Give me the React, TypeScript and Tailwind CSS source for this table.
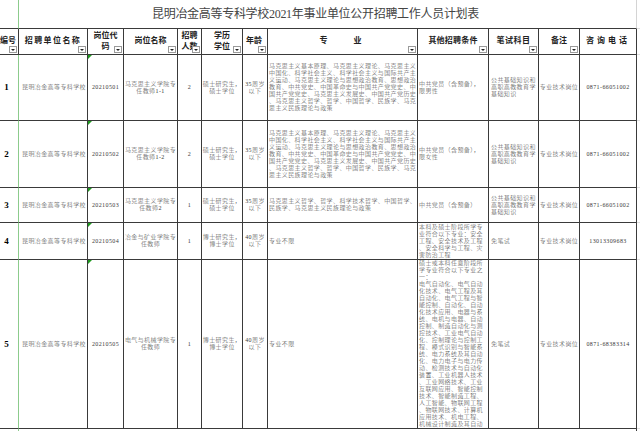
import clsx from "clsx";

const FONT = "font-['Liberation_Serif','Noto_Sans_CJK_SC',serif]";
const COLS =
  "grid-cols-[24px_69px_36px_54px_24px_41px_25px_150px_71px_50px_41px_57px_10px]";
const ROWS = "grid-rows-[29px_26px_66px_67px_35px_37px_169px_20px]";

const marxMajor = [
  "马克思主义基本原理、马克思主义理论、马克思主义",
  "中国化、科学社会主义、科学社会主义与国际共产主",
  "义运动、马克思主义理论与思想政治教育、思想政治",
  "教育、中共党史、中国革命史与中国共产党党史、中",
  "国共产党党史、马克思主义发展史、中国共产党历史",
  "、马克思主义哲学、哲学、中国哲学、民族学、马克",
  "思主义民族理论与政策",
];

const examLines = ["公共基础知识和", "高职高教教育学", "基础知识"];

const elecLines = [
  "硕士或本科任意阶段所",
  "学专业符合以下专业之",
  "一：",
  "电气自动化、电气自动",
  "化技术、电气工程及其",
  "自动化、电气工程与智",
  "能控制、自动化、自动",
  "化技术应用、电器与系",
  "统、电机与电器、自动",
  "控制、制造自动化与测",
  "控技术、工业电气自动",
  "化、控制理论与控制工",
  "程、模式识别与智能系",
  "统、电力系统及其自动",
  "化、电力电子与电力传",
  "动、检测技术与自动化",
  "装置、工业机器人技术",
  "、工业网络技术、工业",
  "互联网应用、智能控制",
  "技术、智能制造工程、",
  "人工智能、物联网工程",
  "、物联网技术、计算机",
  "应用技术、机电工程、",
  "机械设计制造及其自动",
];

type Row = {
  no: string;
  code: string;
  post: string[];
  num: string;
  edu: string[];
  age: string[];
  major: string[];
  other: string[];
  otherLeading?: string;
  exam: string[];
  tel: string;
};

const rows: Row[] = [
  {
    no: "1",
    code: "20210501",
    post: ["马克思主义学院专", "任教师1-1"],
    num: "2",
    edu: ["硕士研究生，", "硕士学位"],
    age: ["35周岁", "以下"],
    major: marxMajor,
    other: ["中共党员（含预备），", "限男性"],
    exam: examLines,
    tel: "0871-66051002",
  },
  {
    no: "2",
    code: "20210502",
    post: ["马克思主义学院专", "任教师1-2"],
    num: "2",
    edu: ["硕士研究生，", "硕士学位"],
    age: ["35周岁", "以下"],
    major: marxMajor,
    other: ["中共党员（含预备），", "限女性"],
    exam: examLines,
    tel: "0871-66051002",
  },
  {
    no: "3",
    code: "20210503",
    post: ["马克思主义学院专", "任教师2"],
    num: "1",
    edu: ["硕士研究生，", "硕士学位"],
    age: ["35周岁", "以下"],
    major: ["马克思主义哲学、哲学、科学技术哲学、中国哲学、", "民族学、马克思主义民族理论与政策"],
    other: ["中共党员（含预备）"],
    exam: examLines,
    tel: "0871-66051002",
  },
  {
    no: "4",
    code: "20210504",
    post: ["冶金与矿业学院专", "任教师"],
    num: "1",
    edu: ["博士研究生，", "博士学位"],
    age: ["40周岁", "以下"],
    major: ["专业不限"],
    other: [
      "本科及硕士阶段所学专",
      "业符合以下专业：安全",
      "工程、安全技术及工程",
      "、安全科学与工程、灾",
      "害防治工程",
    ],
    exam: ["免笔试"],
    tel: "13013309683",
  },
  {
    no: "5",
    code: "20210505",
    post: ["电气与机械学院专", "任教师"],
    num: "1",
    edu: ["博士研究生，", "博士学位"],
    age: ["40周岁", "以下"],
    major: ["专业不限"],
    other: elecLines,
    otherLeading: "leading-[7.3px]",
    exam: ["免笔试"],
    tel: "0871-68383314",
  },
];

function Lines({ lines, className }: { lines: string[]; className?: string }) {
  return (
    <div className={clsx("flex flex-col", className)}>
      {lines.map((l, i) => (
        <span key={i} className="whitespace-nowrap">
          {l}
        </span>
      ))}
    </div>
  );
}

function Filter() {
  return (
    <span className="absolute bottom-[1px] right-[1px] flex h-[7px] w-[8px] items-center justify-center border border-[#9a9a9a] bg-white">
      <span className="h-0 w-0 border-x-[2px] border-t-[2px] border-x-transparent border-t-[#222]" />
    </span>
  );
}

function Cell({
  children,
  className,
  green,
  bold,
}: {
  children?: React.ReactNode;
  className?: string;
  green?: boolean;
  bold?: boolean;
}) {
  return (
    <div
      className={clsx(
        "relative flex items-center overflow-hidden border-b border-r border-b-[#3a3a3a]",
        bold
          ? "text-[9px] leading-none font-bold text-black"
          : "text-[6px] leading-[7px] font-light tracking-[0.4px] text-[#3a3a3a]",
        green ? "border-r-[#8ccb8c]" : "border-r-[#3a3a3a]",
        className
      )}
    >
      {children}
    </div>
  );
}

function Head({
  children,
  className,
  filter = true,
}: {
  children: React.ReactNode;
  className?: string;
  filter?: boolean;
}) {
  return (
    <div
      className={clsx(
        "relative flex items-center justify-center border-b border-r border-[#3a3a3a] text-[8px] font-bold leading-[10.5px] text-[#222]",
        className
      )}
    >
      {children}
      {filter && <Filter />}
    </div>
  );
}

export default function App() {
  return (
    <div className={clsx("h-[431px] w-[640px] overflow-hidden bg-white", FONT)}>
      <div className={clsx("-ml-[5px] grid w-[652px]", COLS, ROWS)}>
        {/* title row */}
        <div className="border-b border-r border-b-[#3a3a3a] border-r-[#8ccb8c]" />
        <div className="col-span-11 flex items-center justify-center border-b border-r border-b-[#3a3a3a] border-r-[#d4d4d4] pr-[24px] text-[12px] leading-none tracking-[-0.3px] text-[#444]">
          昆明冶金高等专科学校2021年事业单位公开招聘工作人员计划表
        </div>
        <div className="border-b border-[#e0e0e0]" />

        {/* header row */}
        <Head className="justify-start pl-[5px]">编号</Head>
        <Head className="tracking-[1.4px]">招聘单位名称</Head>
        <Head>
          <Lines lines={["岗位代", "码"]} className="items-center" />
        </Head>
        <Head>岗位名称</Head>
        <Head>
          <Lines lines={["招聘", "人数"]} className="items-center" />
        </Head>
        <Head>
          <Lines lines={["学历", "学位"]} className="items-center" />
        </Head>
        <Head className="pr-[2px]">年龄</Head>
        <Head className="gap-[26px] pr-[4px]">
          <span>专</span>
          <span>业</span>
        </Head>
        <Head className="tracking-[0.2px]">其他招聘条件</Head>
        <Head className="tracking-[0.5px]">笔试科目</Head>
        <Head>备注</Head>
        <Head filter={false} className="tracking-[3px]">
          咨询电话
        </Head>
        <div className="border-b border-[#e0e0e0]" />

        {rows.map((r) => (
          <div key={r.no} className="contents">
            <Cell green bold className="justify-center">
              {r.no}
            </Cell>
            <Cell className="justify-start pl-[3px]">昆明冶金高等专科学校</Cell>
            <Cell className="justify-center">
              <span className="absolute left-0 top-0 h-0 w-0 border-r-[4px] border-t-[4px] border-r-transparent border-t-[#1f9a1f]" />
              {r.code}
            </Cell>
            <Cell className="justify-center">
              <Lines lines={r.post} className="items-center" />
            </Cell>
            <Cell className="justify-center">{r.num}</Cell>
            <Cell className="justify-center">
              <Lines lines={r.edu} className="items-center" />
            </Cell>
            <Cell className="justify-center">
              <Lines lines={r.age} className="items-center" />
            </Cell>
            <Cell className="justify-start pl-[1px]">
              <Lines lines={r.major} />
            </Cell>
            <Cell className={clsx("justify-start pl-[1px]", r.otherLeading)}>
              <Lines lines={r.other} />
            </Cell>
            <Cell className="justify-start pl-[2px]">
              <Lines lines={r.exam} />
            </Cell>
            <Cell className="justify-center">专业技术岗位</Cell>
            <Cell className="justify-center">{r.tel}</Cell>
            <div className="border-b border-[#e0e0e0]" />
          </div>
        ))}

        {/* next row, barely visible */}
        <div className="border-r border-[#8ccb8c]" />
        <div className="col-span-11 border-r border-[#3a3a3a]" />
        <div />
      </div>
    </div>
  );
}
